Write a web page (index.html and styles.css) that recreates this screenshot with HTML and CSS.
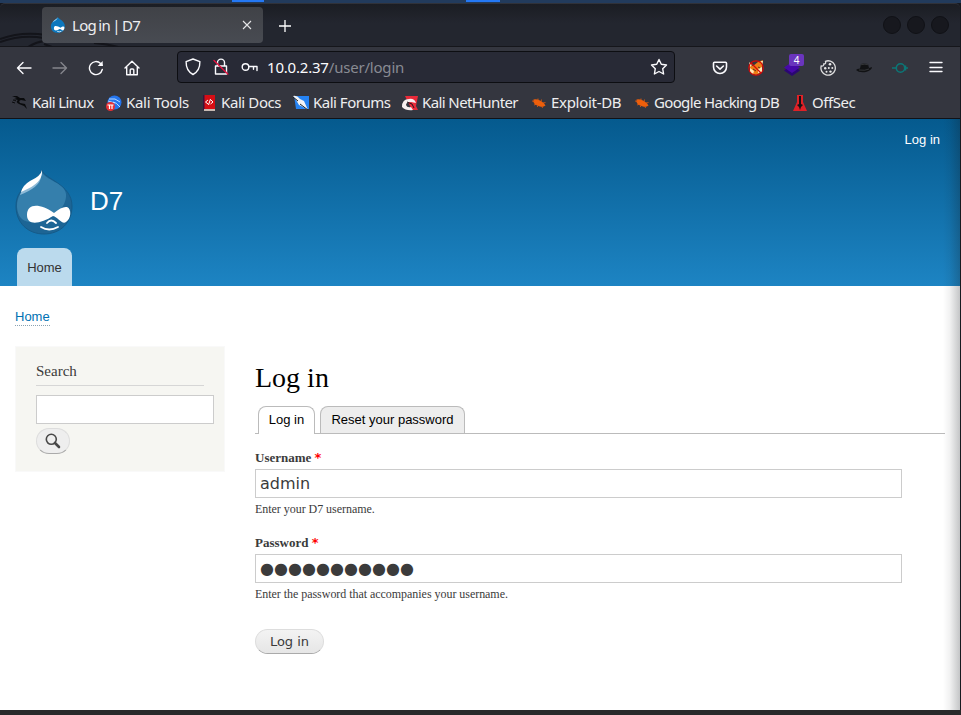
FILE: index.html
```
<!DOCTYPE html>
<html lang="en">
<head>
<meta charset="utf-8">
<title>Log in | D7</title>
<link rel="stylesheet" href="styles.css">
</head>
<body>
<svg class="defs" width="0" height="0">
  <symbol id="bug" viewBox="0 0 16 16"><path d="M2.500 4.500Q5 3.500 9 5.500Q13 7.500 14.500 10.500Q12 12.500 9 11.500Q3.500 10 2.500 7z" fill="#ee5f0b"/><path d="M1 6L4 6.500M3 10L6 9M6 12L8 10M7 3.500L7 5.500M10.500 4.500L10 7M11.500 13L11 11M12 8L14.500 7.500" stroke="#e65b0c" stroke-width=".8" fill="none"/></symbol>
</svg>
<div class="desktop-strip"><span class="mark m1"></span><span class="mark m2"></span></div>
<div class="window">
  <header class="titlebar">
    <svg class="dragon" width="130" height="43" viewBox="0 0 130 43"><path d="M0 35Q22 27 46 31M0 38Q22 30 44 34M28 43Q36 38 44 37M44 40L52 43M94 39Q108 40 118 43" fill="none" stroke="#13141a" stroke-width="2"/></svg>
    <div class="tab">
      <svg width="16" height="16" viewBox="0 0 57 64"><path d="M28 0C30 9 56 14 56 37C56 53 44 64 28 64S0 53 0 37C0 15 24 12 28 0z" fill="#0d78be"/><path d="M27 2C26 12 14 16 6 23C10 12 23 10 27 2z" fill="#9bd3f4"/><path d="M12 45C12 32 27 36 38 43C55 30 58 44 50 53C46 56 40 46 35 48C25 55 12 57 12 45z" fill="#fff"/><path d="M25 57q8 5 17 0" stroke="#fff" stroke-width="3" fill="none"/></svg>
      <span class="tab-title">Log in | D7</span>
      <svg width="16" height="16" viewBox="0 0 16 16"><path d="M4 4l8 8M12 4l-8 8" stroke="#e6e6e8" stroke-width="1.1"/></svg>
    </div>
    <svg class="plus" width="16" height="16" viewBox="0 0 16 16"><path d="M8 2v12M2 8h12" stroke="#fff" stroke-width="1.3"/></svg>
    <div class="controls"><i></i><i></i><i></i></div>
  </header>
  <nav class="toolbar">
    <svg width="16" height="16" viewBox="0 0 16 16" class="stroke"><path d="M15 8H1.5M7 2.5L1.5 8L7 13.5"/></svg>
    <svg width="16" height="16" viewBox="0 0 16 16" class="stroke dim"><path d="M1 8h13.500M9 2.500L14.500 8L9 13.500"/></svg>
    <svg width="16" height="16" viewBox="0 0 16 16" class="stroke"><path d="M14.300 9.500A6.500 6.500 0 1 1 12.600 3.500L14.200 5.200"/><path d="M14.700 1v5H9.700z" fill="#fbfbfe" stroke="none"/></svg>
    <svg width="16" height="16" viewBox="0 0 16 16" class="stroke"><path d="M1 8L8 1.200L15 8M2.700 7V14.800H13.300V7M6.200 14.500V10Q6.200 9 7.200 9H8.800Q9.800 9 9.800 10V14.500"/></svg>
    <div class="urlbar">
      <svg width="16" height="18" viewBox="0 0 16 18" class="stroke"><path d="M8 1L14.900 3.600C15 10 13 14 8 16.500C3 14 1 10 1.100 3.600z"/></svg>
      <svg width="16" height="18" viewBox="0 0 16 18" class="stroke"><path d="M4.500 8V4.600a3.500 3.500 0 0 1 7 0V8M2.500 8H13.500V16H2.500z"/><path d="M1 2.500L14.800 16" stroke="#e2123f"/></svg>
      <svg width="18" height="16" viewBox="0 0 18 16" class="stroke key"><circle cx="4.500" cy="8" r="3.300"/><path d="M7.800 7.500H16V11.500M12.500 7.500V10.300"/></svg>
      <span class="url">10.0.2.37<span class="path">/user/login</span></span>
      <svg width="18" height="18" viewBox="0 0 18 18" class="stroke star"><path d="M9 1.500L11.300 6.300L16.500 7L12.700 10.700L13.600 16L9 13.500L4.400 16L5.300 10.700L1.500 7L6.700 6.300z"/></svg>
    </div>
    <div class="extensions">
      <svg width="16" height="16" viewBox="0 0 16 16" class="stroke"><path d="M2.500 2.300H13.500Q14.500 2.300 14.500 3.300V7A6.500 6.500 0 0 1 1.500 7V3.300Q1.500 2.300 2.500 2.300zM4.600 6L8 9.200L11.400 6" stroke-width="1.600"/></svg>
      <svg width="16" height="16" viewBox="0 0 16 16"><path d="M1 5L5 6L10 2L15 0L14 6L14 12L8 15L3 13z" fill="#ef7c16"/><path d="M2 8L6 11L5 14L2 12zM10 9L14 7V12L10 13zM13 1L15 1L14 5zM1 2L4 5L2 7z" fill="#ffe9b5"/><path d="M5 9l3 2M10 7l2 1" stroke="#56311c"/><circle cx="8" cy="8" r="7.200" fill="none" stroke="#d40909" stroke-width="1.200"/><path d="M3 3L13 13" stroke="#d40909" stroke-width="1.200"/></svg>
      <div class="layered"><svg width="16" height="16" viewBox="0 0 16 16"><path d="M0 10.500L8 5L16 10.500L8 16z" fill="#2b0773"/><path d="M0 7.500L8 2L16 7.500L8 13z" fill="#4709a8"/></svg><span class="badge">4</span></div>
      <svg width="16" height="16" viewBox="0 0 16 16"><path d="M5.500 1.300Q8 .2 10.500 1.200A7.200 7.200 0 1 1 1.200 6Q3.800 6.500 3.800 4Q6.200 4 5.500 1.300z" fill="none" stroke="#dededf" stroke-width="1.300"/><g fill="#e8e8e8"><circle cx="10" cy="4.300" r="1.300"/><circle cx="5.200" cy="8.300" r="1.200"/><circle cx="8.800" cy="8" r="1"/><circle cx="12.300" cy="8" r="1"/><circle cx="6.500" cy="11.800" r="1"/><circle cx="10.500" cy="11.600" r="1.200"/></g></svg>
      <svg width="16" height="16" viewBox="0 0 16 16"><path d="M0 10Q1 8.500 4 8.500L5 4Q8 2.800 12 4L13 8L16 7Q16 10 10 12Q3 13 0 10z" fill="#111214"/><path d="M5 4.700q4-1 7 0M3 10q6 1 10-1" stroke="#55565a" stroke-width=".5" fill="none"/></svg>
      <svg width="16" height="16" viewBox="0 0 16 16"><g fill="none" stroke="#0b7777" stroke-width="1.500"><circle cx="8.500" cy="8" r="4.200"/><path d="M0 8H4.500M12.500 8H16M13.500 5.500V10.500"/></g></svg>
      <svg width="16" height="16" viewBox="0 0 16 16" class="stroke"><path d="M2 2.500H14M2 7.500H14M2 11.500H14" stroke-width="1.400"/></svg>
    </div>
  </nav>
  <nav class="bookmarks">
    <a class="linux"><svg width="16" height="16" viewBox="0 0 16 16"><path d="M0 1L5 1L8 3L12 3L14 6L9 5Q6 6 8 8L13 9L15 14L12 11L7 9Q3 7 6 5L2 4L5 3z" fill="#090a0c"/><path d="M1 5q2 0 3 1M0 7l3 1" stroke="#090a0c"/></svg>Kali Linux</a>
    <a class="tools"><svg width="16" height="16" viewBox="0 0 16 16"><circle cx="8.500" cy="7.500" r="7" fill="#2475ee"/><path d="M3 4l6 0 5 3M7 7q3 0 7 5M2 6l7 2" stroke="#b9dcff" fill="none"/><circle cx="4.500" cy="11.500" r="4.500" fill="#e72f33"/><path d="M1.500 10H7.500M3.500 10v4M6 10v4" stroke="#fff" stroke-width="1.200"/></svg>Kali Tools</a>
    <a class="docs"><svg width="16" height="16" viewBox="0 0 16 16"><path d="M2 0H14V15H2z" fill="#d60e14"/><path d="M2 0H3.500V15H2z" fill="#3d133c"/><path d="M3 14H14V16H3z" fill="#c8bab2"/><path d="M7 5L4.500 7L7 9M10 5L12 7L9.500 9M9.500 4L7.500 10" stroke="#fff" fill="none"/></svg>Kali Docs</a>
    <a class="forums"><svg width="16" height="16" viewBox="0 0 16 16"><path d="M1 1H16V14H3z" fill="#2583f4"/><path d="M0 1Q4 0 7 4L11 6L15 15L10 12L6 10L3 5z" fill="#f1f2f5"/><path d="M0 2L5 6M7 9L15 15" stroke="#16202a"/></svg>Kali Forums</a>
    <a class="nethunter"><svg width="16" height="16" viewBox="0 0 16 16"><path d="M3 1H16L14 11L16 15H10L7 9z" fill="#e92a39"/><path d="M0 12Q0 4 7 4Q12 3 14 8L9 7Q4 7 4 10Q5 13 9 12L11 15Q4 16 0 12z" fill="#f7eff0"/><path d="M5 7l5 2 2 4" stroke="#25151c" fill="none"/></svg>Kali NetHunter</a>
    <a class="exploit"><svg width="16" height="16"><use href="#bug"/></svg>Exploit-DB</a>
    <a class="hacking"><svg width="16" height="16"><use href="#bug"/></svg>Google Hacking DB</a>
    <a class="offsec"><svg width="16" height="16" viewBox="0 0 16 16"><path d="M5 0H11V7L15 16H1L5 7z" fill="#df2127"/><path d="M7 1H9V9L11 10L9 12L8 15L7 12L5 10L7 9z" fill="#161416"/></svg>OffSec</a>
  </nav>
  <main class="page">
    <header class="site-header">
      <a class="login-link">Log in</a>
      <div class="brand">
        <svg width="58" height="66" viewBox="0 0 58 66"><path d="M27 1C29 10 57 15 57 37C57 54 45 65 29 65S1 54 1 37C1 15 25 12 27 1z" fill="#1d6595" stroke="#155b89"/><path d="M27 3C30 11 50 14 51 25C52 38 39 52 15 53Q3 52 2 38C2 16 23 14 27 3z" fill="#357fac"/><path d="M26 8Q25 18 5 26Q6 22 10 17Q21 10 26 8z" fill="#8dbad7"/><path d="M27 1C28 12 18 18 6 23Q8 16 15 12Q26 7 27 1z" fill="#fff"/><path d="M12 46C12 34 25 34 39 44Q47 37 52 38C57 40 56 50 51 53C47 56 43 48 38 47C27 54 12 58 12 46z" fill="#fff"/><path d="M32 54q4-5 9 0M26 58q8 5 17 0" fill="none" stroke="#fff" stroke-width="1.800" stroke-linecap="round"/></svg>
        <span class="site-name">D7</span>
      </div>
      <a class="menu-tab">Home</a>
    </header>
    <div class="breadcrumb"><a>Home</a></div>
    <div class="columns">
      <aside class="sidebar">
        <h2>Search</h2>
        <input class="search" type="text" aria-label="Search">
        <button class="search-button" aria-label="Search"><svg width="16" height="16" viewBox="0 0 16 16"><circle cx="6.300" cy="6.300" r="5" fill="none" stroke="#484848" stroke-width="1.600"/><path d="M10 10L14 14" stroke="#484848" stroke-width="2.600" stroke-linecap="round"/></svg></button>
      </aside>
      <section class="content">
        <h1>Log in</h1>
        <div class="tabs"><a class="active">Log in</a><a>Reset your password</a></div>
        <form>
          <label>Username <b>*</b></label>
          <div class="field">admin</div>
          <p class="hint">Enter your D7 username.</p>
          <label>Password <b>*</b></label>
          <div class="field password">●●●●●●●●●●●</div>
          <p class="hint">Enter the password that accompanies your username.</p>
          <button class="submit" type="button">Log in</button>
        </form>
      </section>
    </div>
    <div class="edge-shadow"></div>
  </main>
</div>
<div class="bottom-strip"></div>
</body>
</html>
```
FILE: styles.css
```
* { box-sizing: border-box; }
body { margin: 0; width: 961px; height: 715px; overflow: hidden; background: #17191f; font-family: "Noto Sans", sans-serif; }
svg { display: block; flex: none; }
.defs { position: absolute; }
.desktop-strip { height: 3px; background: #223b5c; display: flex; }
.mark { height: 2px; background: #2478f4; width: 32px; }
.m1 { margin-left: 232px; }
.m2 { margin-left: 202px; width: 34px; }
.window { width: 960px; height: 707px; }
.titlebar { position: relative; height: 43px; display: flex; align-items: flex-start; background: linear-gradient(#1b1d23, #23262f 45%, #23262f); border-top: 1px solid #303239; border-radius: 5px 5px 0 0; }
.dragon { position: absolute; left: 0; top: 0; }
.tab { position: relative; width: 221px; height: 36px; margin: 3px 0 0 42px; padding: 0 8px; border-radius: 4px; background: linear-gradient(#404247, #484b52); display: flex; align-items: center; gap: 5px; color: #eeeef0; font-size: 15px; }
.tab-title { flex: 1; letter-spacing: -.7px; word-spacing: -1px; padding-left: 1px; }
.plus { margin: 14px 0 0 14px; }
.controls { display: flex; gap: 6px; margin: 12px 11px 0 auto; }
.controls i { width: 18px; height: 18px; border-radius: 50%; background: #17181e; border: 1px solid #101116; }
.toolbar { height: 42px; background: #34363f; border-top: 1px solid #15161b; display: flex; align-items: center; padding-left: 16px; gap: 20px; }
.stroke { fill: none; stroke: #fbfbfe; stroke-width: 1.4; stroke-linecap: round; stroke-linejoin: round; }
.dim { opacity: .4; }
.urlbar { flex: none; width: 498px; height: 32px; margin-left: 17px; margin-top: -1px; border: 1px solid #0d0e12; border-radius: 4px; background: #282a36; display: flex; align-items: center; padding: 0 6px 0 7px; gap: 12px; }
.url { flex: 1; color: #fbfbfe; font-size: 15px; letter-spacing: -.2px; margin-left: -4px; }
.path { color: #898b93; }
.extensions { display: flex; gap: 20px; margin-left: 17px; align-items: center; }
.layered { position: relative; }
.badge { position: absolute; left: 5px; top: -6px; width: 15px; height: 12px; border-radius: 2px; background: #6a35bd; color: #fff; font-size: 10px; line-height: 12px; text-align: center; }
.bookmarks { height: 31px; background: #34363f; border-bottom: 1px solid #111217; display: flex; align-items: center; padding: 0 0 2px 12px; gap: 12px; }
.bookmarks a { flex: none; display: flex; align-items: center; gap: 4px; color: #eeeeef; font-size: 15px; line-height: 20px; white-space: nowrap; }
.bookmarks svg { margin-top: 1px; }
.linux { width: 82px; letter-spacing: -.6px; }
.tools { width: 83px; letter-spacing: -.3px; }
.docs { width: 80px; letter-spacing: -.4px; }
.forums { width: 97px; letter-spacing: -.5px; }
.nethunter { width: 117px; letter-spacing: -.6px; }
.exploit { width: 91px; letter-spacing: -.3px; }
.hacking { width: 146px; letter-spacing: -.65px; }
.offsec { letter-spacing: -.45px; }
.page { position: relative; height: 591px; background: #fff; color: #3b3b3b; font-family: "Liberation Serif", serif; overflow: hidden; }
.site-header { height: 167px; background: linear-gradient(#055a8e, #1d84c3); font-family: "Liberation Sans", sans-serif; color: #fffeff; display: flex; flex-direction: column; }
.login-link { align-self: flex-end; margin: 12px 20px 0 0; font-size: 13px; line-height: 17px; }
.brand { display: flex; height: 66px; margin: 21px 0 0 15px; gap: 17px; }
.site-name { font-size: 26px; line-height: 30px; margin-top: 17px; }
.menu-tab { width: 55px; height: 38px; margin: 13px 0 0 17px; border-radius: 8px 8px 0 0; background: #bbdaed; color: #333; font-size: 13px; line-height: 39px; text-align: center; }
.breadcrumb { height: 60px; padding: 23px 15px 0; font: 13px/16px "Liberation Sans", sans-serif; }
.breadcrumb a { display: inline-block; height: 17px; color: #0071b3; border-bottom: 1px dotted #8ba3b2; }
.columns { display: flex; align-items: flex-start; gap: 30px; padding-left: 15px; }
.sidebar { width: 210px; height: 126px; padding: 15px 20px; background: #f6f6f2; border: 1px solid #f9f9f9; }
.sidebar h2 { margin: 0 0 9px; height: 24px; border-bottom: 1px solid #d6d6d6; font-size: 15px; line-height: 18px; font-weight: 400; }
.search { display: block; width: 178px; height: 29px; border: 1px solid #ccc; background: #fff; }
.search-button { width: 34px; height: 26px; margin-top: 4px; padding: 0 0 1px 8px; border: 1px solid #ddd; border-bottom-color: #aaa; border-radius: 13px; background: #eee; }
.content { width: 690px; }
h1 { margin: 15px 0 11px; font-size: 28px; line-height: 34px; font-weight: 400; color: #000; }
.tabs { height: 28px; border-bottom: 1px solid #bbb; display: flex; gap: 5px; padding-left: 3px; font: 13px/25px "Liberation Sans", sans-serif; color: #000; }
.tabs a { width: 145px; height: 27px; border: 1px solid #bbb; border-bottom: 0; border-radius: 8px 8px 0 0; background: #ededed; text-align: center; }
.tabs .active { width: 57px; height: 28px; background: #fff; }
label { display: block; margin-top: 15px; height: 20px; font-size: 13px; line-height: 17px; font-weight: 700; }
label b { color: #f00; font: 700 13px/12px "DejaVu Sans", sans-serif; }
.field { width: 647px; height: 29px; padding-left: 4px; border: 1px solid #ccc; font: 16px/27px "DejaVu Sans", sans-serif; }
.password { line-height: 28px; letter-spacing: .05px; }
.hint { margin: 2px 0 0; height: 19px; font-size: 12px; line-height: 18px; letter-spacing: -.04px; }
.submit { display: block; width: 69px; height: 25px; margin-top: 25px; padding: 0; border: 1px solid #ddd; border-bottom-color: #aaa; border-radius: 13px; background: linear-gradient(#f3f3f3, #e6e6e6); color: #3a3a3a; font: 13px/22px "DejaVu Sans", sans-serif; }
.edge-shadow { position: absolute; right: 0; top: 0; bottom: 0; width: 17px; background: linear-gradient(to right, rgba(20,25,30,0), rgba(20,25,30,.06) 40%, rgba(20,25,30,.25)); }
.bottom-strip { height: 5px; background: #29292a; }
```
